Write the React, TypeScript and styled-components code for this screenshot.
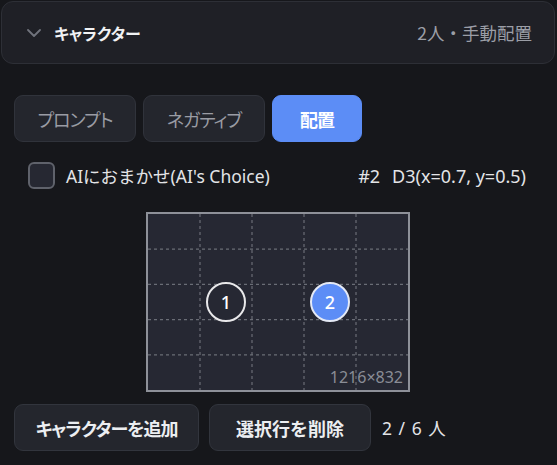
import React, { useState } from 'react';
import styled, { createGlobalStyle } from 'styled-components';

const GlobalStyle = createGlobalStyle`
  html, body {
    margin: 0;
    padding: 0;
    background: #16171b;
  }
  body {
    font-family: "Noto Sans", "Noto Sans CJK JP", sans-serif;
    color: #e3e4e7;
  }
`;

const CANVAS_W = 1216;
const CANVAS_H = 832;
const COLS = 5;
const ROWS = 5;

interface CharacterPin {
  id: number;
  x: number;
  y: number;
}

const pins: CharacterPin[] = [
  { id: 1, x: 0.3, y: 0.5 },
  { id: 2, x: 0.7, y: 0.5 },
];

// 탭 이름과 폭
const tabs = [
  { label: 'プロンプト', width: 122 },
  { label: 'ネガティブ', width: 122 },
  { label: '配置', width: 90 },
];

/* 위치 그리드의 점선 */
const GridLines: React.FC = () => (
  <GridSvg viewBox="0 0 260 176" preserveAspectRatio="none">
    {Array.from({ length: COLS - 1 }).map((_, i) => {
      const x = ((i + 1) * 260) / COLS;
      return <line key={`v${i}`} x1={x} y1={0} x2={x} y2={176} />;
    })}
    {Array.from({ length: ROWS - 1 }).map((_, i) => {
      const y = ((i + 1) * 176) / ROWS;
      return <line key={`h${i}`} x1={0} y1={y} x2={260} y2={y} />;
    })}
  </GridSvg>
);

const App: React.FC = () => {
  const [activeTab, setActiveTab] = useState(2);
  const [aiChoice, setAiChoice] = useState(false);
  const [selected, setSelected] = useState(2);

  const current = pins.find((p) => p.id === selected)!;
  const cellName = `${String.fromCharCode(65 + Math.floor(current.x * COLS))}${Math.floor(current.y * ROWS) + 1}`;

  return (
    <>
      <GlobalStyle />
      <Page>
        <Header>
          <Chevron viewBox="0 0 14 8">
            <path d="M1 1l6 6 6-6" />
          </Chevron>
          <Title>キャラクター</Title>
          <Summary>{pins.length}人・手動配置</Summary>
        </Header>

        <Body>
          <TabRow>
            {tabs.map((t, i) => (
              <Tab
                key={t.label}
                $active={i === activeTab}
                $width={t.width}
                onClick={() => setActiveTab(i)}
              >
                {t.label}
              </Tab>
            ))}
          </TabRow>

          <OptionRow>
            <CheckLabel>
              <CheckBox $checked={aiChoice} onClick={() => setAiChoice((v) => !v)} />
              AIにおまかせ(AI's Choice)
            </CheckLabel>
            <Position>
              #{current.id}
              <Cell>
                {cellName}(x={current.x}, y={current.y})
              </Cell>
            </Position>
          </OptionRow>

          <GridWrap>
            <Grid>
              <GridLines />
              {pins.map((p) => (
                <Pin
                  key={p.id}
                  $selected={p.id === selected}
                  style={{ left: `${p.x * 100}%`, top: `${p.y * 100}%` }}
                  onClick={() => setSelected(p.id)}
                >
                  {p.id}
                </Pin>
              ))}
              <SizeLabel>
                {CANVAS_W}×{CANVAS_H}
              </SizeLabel>
            </Grid>
          </GridWrap>

          <ActionRow>
            <ActionButton $width={185} $tight>
              キャラクターを追加
            </ActionButton>
            <ActionButton $width={162}>選択行を削除</ActionButton>
            <Count>{pins.length} / 6 人</Count>
          </ActionRow>
        </Body>
      </Page>
    </>
  );
};

/* ===================== styles ===================== */

const Page = styled.div`
  width: 557px;
  height: 465px;
  padding: 1px 2px 0 1px;
  box-sizing: border-box;
  overflow: hidden;
`;

const Header = styled.div`
  height: 63px;
  box-sizing: border-box;
  display: flex;
  align-items: center;
  padding: 0 22px 0 25px;
  background: #1f2026;
  border: 1px solid #2d2f36;
  border-radius: 12px;
`;

const Chevron = styled.svg`
  width: 14px;
  height: 8px;
  fill: none;
  stroke: #70737c;
  stroke-width: 1.8;
  stroke-linecap: round;
  stroke-linejoin: round;
  margin-right: 13px;
`;

const Title = styled.div`
  font-family: "Noto Sans CJK JP", sans-serif;
  font-feature-settings: "palt" 1;
  font-size: 16px;
  font-weight: 700;
  color: #f1f2f4;
`;

const Summary = styled.div`
  margin-left: auto;
  font-family: "Noto Sans CJK JP", sans-serif;
  font-size: 17.5px;
  color: #9b9ea6;
`;

const Body = styled.div`
  padding: 0 0 0 13px;
`;

const TabRow = styled.div`
  display: flex;
  gap: 7px;
  margin-top: 31px;
`;

const Tab = styled.button<{ $active: boolean; $width: number }>`
  width: ${(p) => p.$width}px;
  height: 47px;
  padding: 0;
  border-radius: 9px;
  border: 1px solid ${(p) => (p.$active ? '#5c8df6' : '#30333b')};
  background: ${(p) => (p.$active ? '#5c8df6' : '#24262d')};
  color: ${(p) => (p.$active ? '#ffffff' : '#9a9ca4')};
  font-family: "Noto Sans CJK JP", sans-serif;
  font-feature-settings: "palt" 1;
  font-size: 18px;
  letter-spacing: -1px;
  font-weight: ${(p) => (p.$active ? 700 : 400)};
  cursor: pointer;
`;

const OptionRow = styled.div`
  display: flex;
  align-items: center;
  justify-content: space-between;
  margin-top: 20px;
  padding: 0 29px 0 14px;
  height: 27px;
`;

const CheckLabel = styled.label`
  display: flex;
  align-items: center;
  gap: 11px;
  font-size: 17.5px;
  color: #e3e4e7;
`;

const CheckBox = styled.span<{ $checked: boolean }>`
  width: 27px;
  height: 27px;
  box-sizing: border-box;
  border-radius: 6px;
  border: 2px solid #5f626b;
  background: ${(p) => (p.$checked ? '#5c8df6' : '#262832')};
  cursor: pointer;
`;

const Position = styled.div`
  font-size: 18px;
  color: #e3e4e7;
`;

const Cell = styled.span`
  margin-left: 12px;
`;

const GridWrap = styled.div`
  display: flex;
  justify-content: center;
  margin-top: 23px;
  padding-right: 13px;
`;

const Grid = styled.div`
  position: relative;
  width: 264px;
  height: 180px;
  box-sizing: border-box;
  border: 2px solid #8e9199;
  background: #262833;
`;

const GridSvg = styled.svg`
  position: absolute;
  inset: 0;
  width: 100%;
  height: 100%;
  line {
    stroke: #6a6d76;
    stroke-width: 1.2;
    stroke-dasharray: 3 3;
    vector-effect: non-scaling-stroke;
  }
`;

const Pin = styled.div<{ $selected: boolean }>`
  position: absolute;
  width: 40px;
  height: 40px;
  box-sizing: border-box;
  transform: translate(-50%, -50%);
  border-radius: 50%;
  border: 2px solid ${(p) => (p.$selected ? '#e4e9f5' : '#e8e8ea')};
  background: ${(p) => (p.$selected ? '#5c8df6' : '#262833')};
  color: #ffffff;
  display: flex;
  align-items: center;
  justify-content: center;
  font-size: 18px;
  font-weight: 500;
  cursor: pointer;
`;

const SizeLabel = styled.div`
  position: absolute;
  right: 5px;
  bottom: 2px;
  font-size: 16px;
  color: #8a8d96;
`;

const ActionRow = styled.div`
  display: flex;
  align-items: center;
  gap: 10px;
  margin-top: 12px;
`;

const ActionButton = styled.button<{ $width: number; $tight?: boolean }>`
  width: ${(p) => p.$width}px;
  height: 47px;
  padding: 0;
  border-radius: 9px;
  border: 1px solid #32353d;
  background: #24262d;
  color: #eceef1;
  font-family: "Noto Sans CJK JP", sans-serif;
  font-feature-settings: ${(p) => (p.$tight ? '"palt" 1' : 'normal')};
  font-size: 18px;
  letter-spacing: ${(p) => (p.$tight ? '-1px' : '0')};
  font-weight: 700;
  cursor: pointer;
`;

const Count = styled.div`
  margin-left: 1px;
  font-size: 17.5px;
  color: #e3e4e7;
  letter-spacing: 1px;
`;

export default App;
